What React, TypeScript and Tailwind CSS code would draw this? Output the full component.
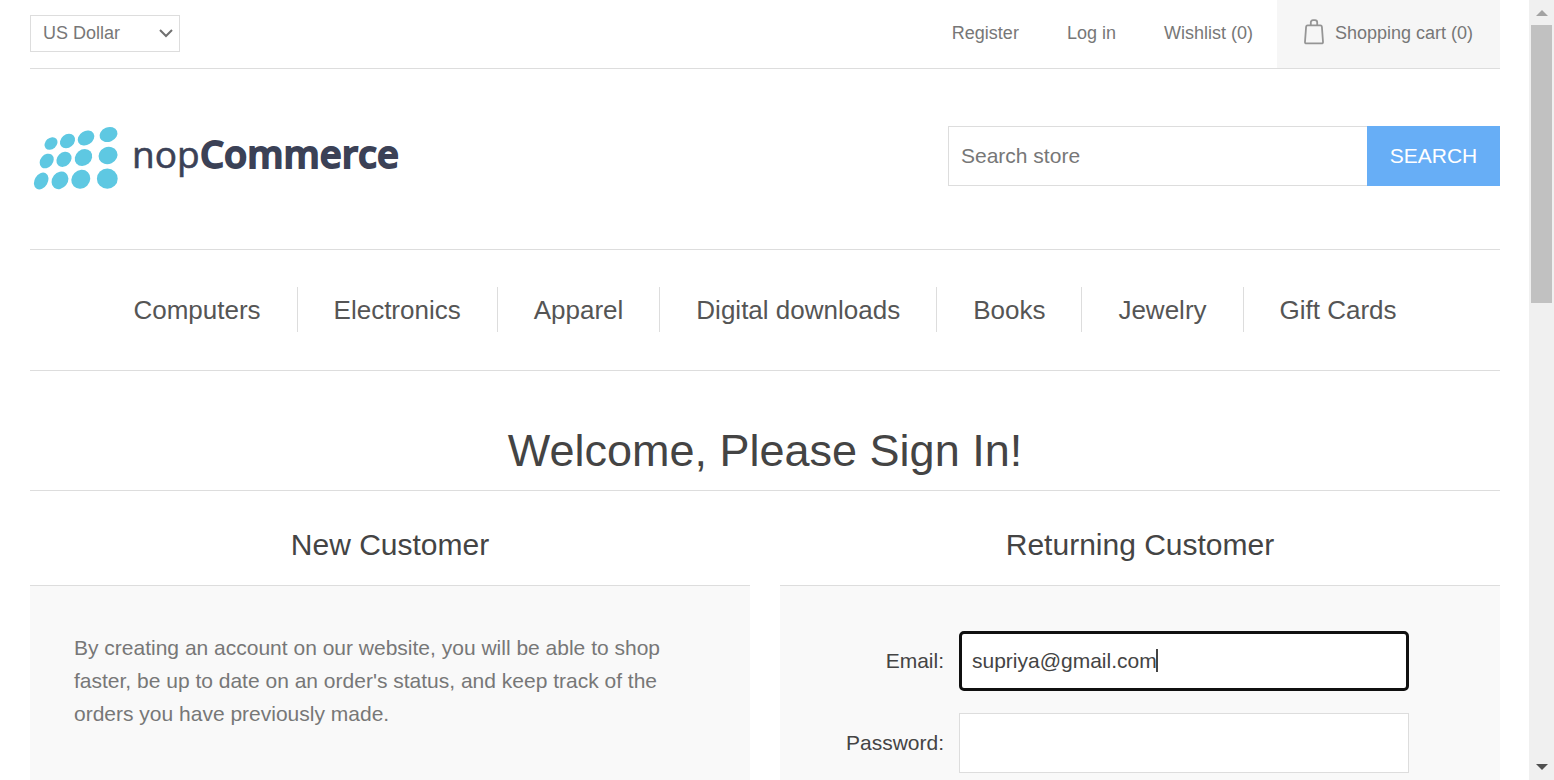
import React from "react";

const categories = [
  "Computers",
  "Electronics",
  "Apparel",
  "Digital downloads",
  "Books",
  "Jewelry",
  "Gift Cards",
];

// Each dot: centre x, centre y, long radius, short radius, rotation in degrees
const logoDots = [
  [19, 23.5, 7.2, 5.6, -42],
  [35.5, 21, 8.2, 6.6, -40],
  [54, 18, 8.8, 6.9, -32],
  [76.5, 14.5, 9.2, 7.3, -22],
  [14.7, 41, 8, 6.3, -50],
  [32, 39.3, 8.3, 6.8, -45],
  [51.5, 37.5, 9.3, 7.9, -40],
  [76, 35.5, 9.7, 8.5, -25],
  [9.2, 61, 9, 6.6, -60],
  [28, 60.3, 9.4, 7.8, -52],
  [48.8, 59.3, 10, 9, -45],
  [75.3, 58.7, 10.4, 10.1, 0],
];

function Logo() {
  return (
    <a href="#home" aria-label="nopCommerce" className="block">
      <svg width="375" height="76" viewBox="0 0 375 76" aria-hidden="true">
        <g fill="#5ec8e2">
          {logoDots.map(([x, y, rx, ry, angle]) => (
            <ellipse
              key={`${x}-${y}`}
              cx={x}
              cy={y}
              rx={rx}
              ry={ry}
              transform={`rotate(${angle} ${x} ${y})`}
            />
          ))}
        </g>
        <g fill="#3b4156" stroke="#3b4156" fontFamily="'Open Sans', 'Noto Sans', sans-serif">
          <text x="100" y="48" fontSize="37" strokeWidth="0.6">
            nop
          </text>
          <text x="168" y="48" fontSize="38" fontWeight="600" strokeWidth="1.8">
            Commerce
          </text>
        </g>
      </svg>
    </a>
  );
}

function BagIcon() {
  return (
    <svg width="22" height="28" viewBox="0 0 22 28" fill="none" stroke="#959595" strokeWidth="1.8" aria-hidden="true">
      <path d="M4.6 7.4h12.8c1 0 1.4.5 1.5 1.4l1.1 15c.1 1.2-.4 1.6-1.5 1.6h-15c-1.1 0-1.6-.4-1.5-1.6l1.1-15c.1-.9.5-1.4 1.5-1.4z" />
      <path d="M7.8 7.2V4.6c0-1.6.8-2.4 2.2-2.4h2c1.4 0 2.2.8 2.2 2.4v2.6" />
    </svg>
  );
}

function ScrollTrack() {
  return (
    <div className="flex w-[25px] shrink-0 flex-col bg-[#f0f0f0]" aria-hidden="true">
      <div className="flex h-[25px] items-center justify-center">
        <svg width="12" height="6" viewBox="0 0 12 6">
          <path d="M0 6 6 0l6 6z" fill="#a3a3a3" />
        </svg>
      </div>
      <div className="mx-[2px] h-[278px] bg-[#c1c1c1]" />
      <div className="mt-auto flex h-[26px] items-center justify-center">
        <svg width="12" height="6" viewBox="0 0 12 6">
          <path d="M0 0h12L6 6z" fill="#505050" />
        </svg>
      </div>
    </div>
  );
}

function Header() {
  return (
    <header>
      <div className="flex h-[69px] items-stretch justify-between border-b border-[#ddd] text-[18px] text-[#777]">
        <div className="relative mt-[15px] h-[37px] w-[150px]">
          <select
            aria-label="Currency"
            className="h-full w-full appearance-none border border-[#ddd] bg-white pl-3 text-[18px] text-[#777]"
          >
            <option>US Dollar</option>
          </select>
          <svg
            className="pointer-events-none absolute top-[14px] right-[7px]"
            width="14"
            height="9"
            viewBox="0 0 14 9"
            fill="none"
            stroke="#707070"
            strokeWidth="2"
            aria-hidden="true"
          >
            <path d="M1 1l6 6 6-6" />
          </svg>
        </div>
        <nav className="flex items-stretch" aria-label="Account">
          <a href="#register" className="flex items-center px-6 pb-[2px]">Register</a>
          <a href="#login" className="flex items-center px-6 pb-[2px]">Log in</a>
          <a href="#wishlist" className="flex items-center px-6 pb-[2px]">Wishlist (0)</a>
          <a href="#cart" className="flex items-center gap-[10px] bg-[#f6f6f6] pr-[27px] pb-[2px] pl-[26px]">
            <span className="pb-[2px]">
              <BagIcon />
            </span>
            Shopping cart (0)
          </a>
        </nav>
      </div>
      <div className="flex h-[181px] items-start justify-between border-b border-[#ddd] pt-[51px]">
        <div className="pl-[2px]">
          <Logo />
        </div>
        <form className="mt-[6px] flex h-[60px] w-[552px] text-[21px]" onSubmit={(e) => e.preventDefault()}>
          <input
            type="text"
            aria-label="Search store"
            placeholder="Search store"
            className="min-w-0 flex-1 border border-r-0 border-[#ddd] px-3 text-[#777] placeholder:text-[#777]"
          />
          <button type="submit" className="w-[133px] bg-[#67aef6] text-white">
            SEARCH
          </button>
        </form>
      </div>
    </header>
  );
}

function CategoryNav() {
  return (
    <nav className="border-b border-[#ddd] pt-[37px] pb-[38px]" aria-label="Categories">
      <ul className="flex justify-center divide-x divide-[#ddd]">
        {categories.map((name) => (
          <li key={name} className="px-[36px] pt-[2px]">
            <a href="#category" className="block text-[26px] leading-[43px] whitespace-nowrap text-[#555]">
              {name}
            </a>
          </li>
        ))}
      </ul>
    </nav>
  );
}

export default function App() {
  return (
    <div className="flex h-screen overflow-hidden bg-white font-['Liberation_Sans',Arial,sans-serif]">
      <div className="flex min-w-0 flex-1 flex-col overflow-hidden pr-[29px] pl-[30px]">
        <Header />
        <CategoryNav />
        <main className="flex flex-1 flex-col">
          <h1 className="border-b border-[#ddd] pt-[50px] pb-[9px] text-center text-[45px] leading-[60px] text-[#444]">
            Welcome, Please Sign In!
          </h1>
          <div className="grid flex-1 grid-cols-2 gap-[30px]">
            <section className="flex flex-col">
              <h2 className="pt-[39px] pb-[25px] text-center text-[30px] leading-[30px] text-[#444]">New Customer</h2>
              <div className="flex-1 border-t border-[#ddd] bg-[#f9f9f9] px-[44px] pt-[45px]">
                <p className="text-[21px] leading-[33px] text-[#777]">
                  By creating an account on our website, you will be able to shop faster, be up to date on an
                  order's status, and keep track of the orders you have previously made.
                </p>
              </div>
            </section>
            <section className="flex flex-col">
              <h2 className="pt-[39px] pb-[25px] text-center text-[30px] leading-[30px] text-[#444]">Returning Customer</h2>
              <form className="flex flex-1 flex-col gap-[22px] border-t border-[#ddd] bg-[#f9f9f9] pt-[45px] text-[21px] text-[#444]">
                <div className="flex items-center gap-[15px]">
                  <label htmlFor="email" className="w-[164px] text-right">Email:</label>
                  <div className="relative h-[60px] w-[450px]">
                    <input
                      id="email"
                      type="email"
                      defaultValue="supriya@gmail.com"
                      className="h-full w-full rounded-[5px] border-3 border-[#101010] bg-white px-[10px] text-[#444] outline-none"
                    />
                    <span className="absolute top-[18px] left-[197px] h-[23px] w-[2px] bg-[#444]" aria-hidden="true" />
                  </div>
                </div>
                <div className="flex items-center gap-[15px]">
                  <label htmlFor="password" className="w-[164px] text-right">Password:</label>
                  <input
                    id="password"
                    type="password"
                    className="h-[60px] w-[450px] border border-[#ddd] bg-white px-3 text-[#444]"
                  />
                </div>
              </form>
            </section>
          </div>
        </main>
      </div>
      <ScrollTrack />
    </div>
  );
}
